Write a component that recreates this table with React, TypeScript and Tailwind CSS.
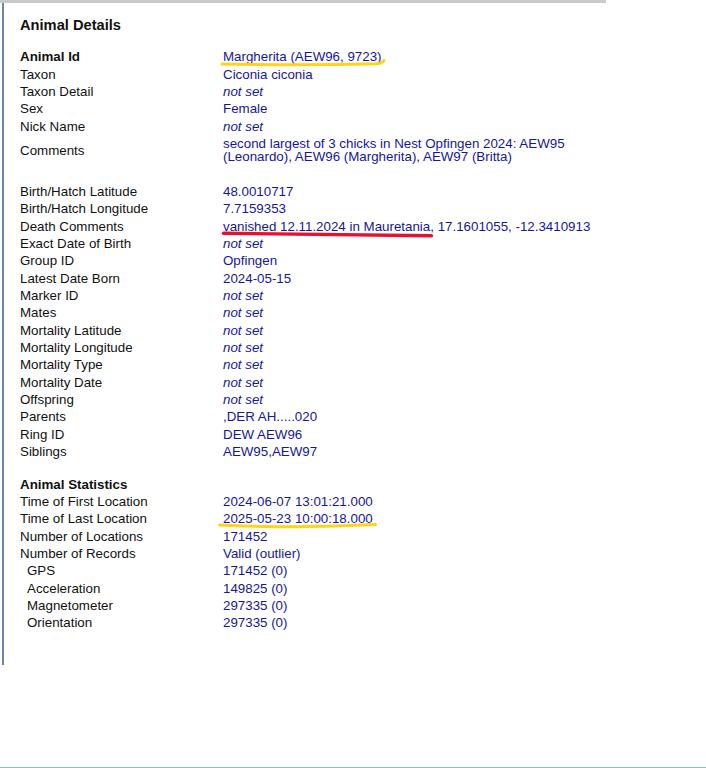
import React from "react";

type Row = { label: string; value?: string; italic?: boolean; bold?: boolean; indent?: boolean };

const details: Row[] = [
  { label: "Animal Id", value: "Margherita (AEW96, 9723)", bold: true },
  { label: "Taxon", value: "Ciconia ciconia" },
  { label: "Taxon Detail", value: "not set", italic: true },
  { label: "Sex", value: "Female" },
  { label: "Nick Name", value: "not set", italic: true },
  {
    label: "Comments",
    value: "second largest of 3 chicks in Nest Opfingen 2024: AEW95 (Leonardo), AEW96 (Margherita), AEW97 (Britta)",
  },
];

const more: Row[] = [
  { label: "Birth/Hatch Latitude", value: "48.0010717" },
  { label: "Birth/Hatch Longitude", value: "7.7159353" },
  { label: "Death Comments", value: "vanished 12.11.2024 in Mauretania, 17.1601055, -12.3410913" },
  { label: "Exact Date of Birth", value: "not set", italic: true },
  { label: "Group ID", value: "Opfingen" },
  { label: "Latest Date Born", value: "2024-05-15" },
  { label: "Marker ID", value: "not set", italic: true },
  { label: "Mates", value: "not set", italic: true },
  { label: "Mortality Latitude", value: "not set", italic: true },
  { label: "Mortality Longitude", value: "not set", italic: true },
  { label: "Mortality Type", value: "not set", italic: true },
  { label: "Mortality Date", value: "not set", italic: true },
  { label: "Offspring", value: "not set", italic: true },
  { label: "Parents", value: ",DER AH.....020" },
  { label: "Ring ID", value: "DEW AEW96" },
  { label: "Siblings", value: "AEW95,AEW97" },
];

const stats: Row[] = [
  { label: "Time of First Location", value: "2024-06-07 13:01:21.000" },
  { label: "Time of Last Location", value: "2025-05-23 10:00:18.000" },
  { label: "Number of Locations", value: "171452" },
  { label: "Number of Records", value: "Valid (outlier)" },
  { label: "GPS", value: "171452 (0)", indent: true },
  { label: "Acceleration", value: "149825 (0)", indent: true },
  { label: "Magnetometer", value: "297335 (0)", indent: true },
  { label: "Orientation", value: "297335 (0)", indent: true },
];

const DetailRow = ({ row }: { row: Row }) => (
  <>
    <div
      className={`flex items-center py-[2px] text-[#111] ${row.bold ? "font-bold" : ""} ${
        row.indent ? "pl-[7px]" : ""
      }`}
    >
      {row.label}
    </div>
    <div className={`py-[2px] text-[#16169a] ${row.italic ? "italic" : ""}`}>{row.value}</div>
  </>
);

const Spacer = ({ h }: { h: string }) => <div className={`col-span-2 ${h}`}></div>;

export default function App() {
  return (
    <div
      className="relative h-[768px] w-[706px] border-b border-[#8fc4bc] bg-white"
      style={{ fontFamily: '"Liberation Sans", Arial, sans-serif' }}
    >
      <div className="w-[606px] border-t-[3px] border-[#cacaca]">
        <div className="ml-[2px] h-[662px] border-l-2 border-[#6a86a4] pl-[16px] pt-[15px]">
          <h2 className="text-[14.67px] font-bold leading-[15px] text-[#111]">Animal Details</h2>
          <div className="mt-[15.3px] grid grid-cols-[203px_377px] text-[13.33px] leading-[13.33px]">
            {details.map((r) => (
              <DetailRow key={r.label} row={r} />
            ))}
            <Spacer h="h-[17.33px]" />
            {more.map((r) => (
              <DetailRow key={r.label} row={r} />
            ))}
            <Spacer h="h-[15.67px]" />
            <div className="col-span-2 py-[2px] font-bold text-[#111]">Animal Statistics</div>
            {stats.map((r) => (
              <DetailRow key={r.label} row={r} />
            ))}
          </div>
        </div>
      </div>

      {/* marker strokes drawn over the screenshot */}
      <svg className="pointer-events-none absolute left-0 top-0" width="706" height="768" fill="none">
        <path d="M222 64 Q300 65.5 377 63.8 Q382.5 63 384 60.5" stroke="#ffd414" strokeWidth="3" strokeLinecap="round" />
        <path d="M223.5 233.2 Q330 234.2 431.5 235.8" stroke="#ea0f2e" strokeWidth="3.4" strokeLinecap="round" />
        <path d="M219.5 525 Q300 528.6 375.5 524.6" stroke="#ffd414" strokeWidth="3" strokeLinecap="round" />
      </svg>
    </div>
  );
}
